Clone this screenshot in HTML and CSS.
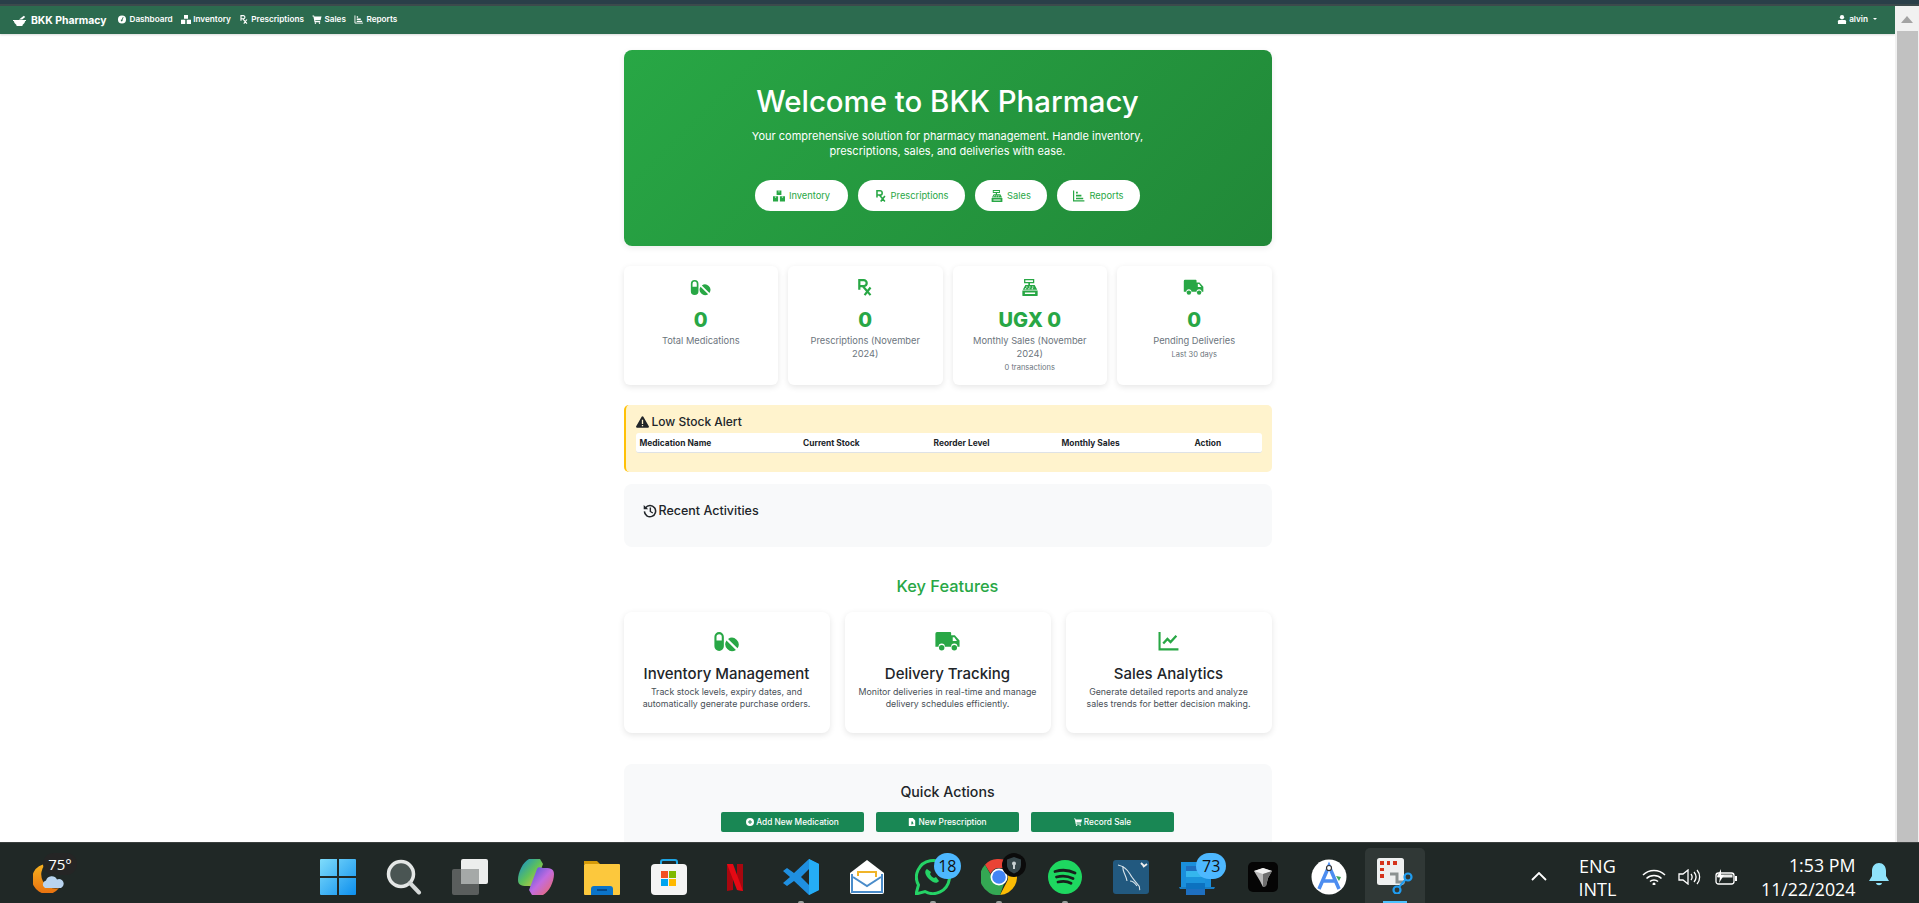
FILE: index.html

```html
<!DOCTYPE html>
<html lang="en">
<head>
    <meta charset="UTF-8">
    <meta name="viewport" content="width=device-width, initial-scale=1.0">
    <title>BKK Pharmacy</title>
    <link rel="stylesheet" href="styles.css">
</head>
<body>

    <!-- icon set -->
    <svg class="sprite" xmlns="http://www.w3.org/2000/svg">
        <symbol id="i-pills" viewBox="0 0 26 20">
            <path d="M5.500 1a4.500 4.500 0 0 1 4.500 4.500v9a4.500 4.500 0 0 1-9 0v-9A4.500 4.500 0 0 1 5.500 1zm0 2A2.500 2.500 0 0 0 3 5.500V9h5V5.500A2.500 2.500 0 0 0 5.500 3z" fill-rule="evenodd"/>
            <path d="M14 7.500a6.500 6.500 0 0 1 9 9zM12.500 9l9 9a6.500 6.500 0 0 1-9-9z"/>
        </symbol>
        <symbol id="i-rx" viewBox="0 0 16 20">
            <path d="M1.300 12.500V1.300h5.200a3.500 3.500 0 0 1 0 7H1.300M5 8l9.500 11M14.500 10L7.500 19" fill="none" stroke="currentColor" stroke-width="2.600"/>
        </symbol>
        <symbol id="i-register" viewBox="0 0 20 20">
            <path d="M3 0h12v5h-5v2h5.500l3 5.500H1.500l3-5.500H8V5H3zM4.500 1.500v2h9v-2zM1 13.500h18V19a1 1 0 0 1-1 1H2a1 1 0 0 1-1-1z" fill-rule="evenodd"/>
            <path d="M5.500 8.800h1.500v1.200H5.500zm3.500 0h1.500v1.200H9zm3.500 0H14v1.200h-1.500zM4 10.800h1.500V12H4zm4 0h1.500V12H8zm4 0h1.500V12H12zM4 16h12v1.500H4z" fill="#fff"/>
        </symbol>
        <symbol id="i-truck" viewBox="0 0 24 20">
            <path d="M1.500 1H14a1 1 0 0 1 1 1v2h3.500L23 9v6h-2a3 3 0 0 0-6 0H9a3 3 0 0 0-6 0H0V2.500A1.500 1.500 0 0 1 1.500 1zM16.500 6v3.500h4L18 6z" fill-rule="evenodd"/>
            <circle cx="6" cy="16" r="2.600"/><circle cx="18" cy="16" r="2.600"/>
        </symbol>
        <symbol id="i-chart" viewBox="0 0 20 20">
            <path d="M1 1v16.500h18" fill="none" stroke="currentColor" stroke-width="2"/>
            <path d="M4.500 12l4-4.500 3 3L17 4.500" fill="none" stroke="currentColor" stroke-width="2.200"/>
        </symbol>
        <symbol id="i-bars" viewBox="0 0 20 20">
            <path d="M1 1v17h18" fill="none" stroke="currentColor" stroke-width="2"/>
            <path d="M5 3h3v3H5zM5 8h9v3H5zM5 13h12v2.500H5z"/>
        </symbol>
        <symbol id="i-boxes" viewBox="0 0 20 18">
            <path d="M6 0h8v7.500H6zM0 9.500h8.500V18H0zM11.500 9.500H20V18h-8.500z"/>
            <path d="M9 0h2v3H9zM3.200 9.500h2v3h-2zM14.800 9.500h2v3h-2z" fill="#fff" opacity=".55"/>
        </symbol>
        <symbol id="i-gauge" viewBox="0 0 20 20">
            <path d="M10 1a9 9 0 1 0 0 18 9 9 0 0 0 0-18zm3.500 4L11 11a2 2 0 1 1-1.600-.900L12 4.500z" fill-rule="evenodd"/>
        </symbol>
        <symbol id="i-cart" viewBox="0 0 20 20">
            <path d="M0 1h3.500l.600 2.500H20l-2 8H6.200l.400 2H17V16H4.500L2 3.300H0z"/>
            <circle cx="6.500" cy="18" r="1.800"/><circle cx="15.500" cy="18" r="1.800"/>
        </symbol>
        <symbol id="i-user" viewBox="0 0 18 20">
            <circle cx="9" cy="5" r="4.800"/><path d="M3 11h12a3 3 0 0 1 3 3v6H0v-6a3 3 0 0 1 3-3z"/>
        </symbol>
        <symbol id="i-mortar" viewBox="0 0 24 20">
            <path d="M0 9h24v2h-1.500a10 10 0 0 1-5 7.500V20h-11v-1.500A10 10 0 0 1 1.500 11H0z"/>
            <path d="M11 8l9-7 2.500 2.500L17 8z"/>
        </symbol>
        <symbol id="i-warn" viewBox="0 0 20 18">
            <path d="M10 0a1.500 1.500 0 0 1 1.300.800l8.400 14.900A1.500 1.500 0 0 1 18.400 18H1.600a1.500 1.500 0 0 1-1.300-2.300L8.700.800A1.500 1.500 0 0 1 10 0z"/>
            <path d="M9 5.500h2V12H9zM9 13.500h2v2H9z" fill="#fff3cd"/>
        </symbol>
        <symbol id="i-history" viewBox="0 0 20 20">
            <path d="M3.500 5.500A8 8 0 1 1 2 10.500" fill="none" stroke="currentColor" stroke-width="2.200"/>
            <path d="M1 1.500l6.500 6H1zM9.500 5h2v5.200l3 2-1 1.500-4-2.600z"/>
        </symbol>
        <symbol id="i-plus" viewBox="0 0 20 20">
            <path d="M10 0a10 10 0 1 0 0 20 10 10 0 0 0 0-20zm-1.200 5h2.400v3.800H15v2.400h-3.800V15H8.800v-3.800H5V8.800h3.800z" fill-rule="evenodd"/>
        </symbol>
        <symbol id="i-file" viewBox="0 0 16 20">
            <path d="M1.500 0H10l6 6v12.500a1.500 1.500 0 0 1-1.500 1.500h-13A1.500 1.500 0 0 1 0 18.500v-17A1.500 1.500 0 0 1 1.500 0zM6.500 9v7h2v-2.500l2 2.500 1.500-1.500-2-2a2.200 2.200 0 0 0-1-3.500z" fill-rule="evenodd"/>
        </symbol>
    </svg>

    <div class="top-strip"></div>

    <div class="window">
        <div class="page">
            <nav class="navbar">
                <a class="brand"><svg class="brand-icon"><use href="#i-mortar"/></svg>BKK Pharmacy</a>
                <a class="nav-link"><svg><use href="#i-gauge"/></svg>Dashboard</a>
                <a class="nav-link"><svg><use href="#i-boxes"/></svg>Inventory</a>
                <a class="nav-link"><svg><use href="#i-rx"/></svg>Prescriptions</a>
                <a class="nav-link"><svg><use href="#i-cart"/></svg>Sales</a>
                <a class="nav-link"><svg><use href="#i-bars"/></svg>Reports</a>
                <a class="nav-link nav-user"><svg><use href="#i-user"/></svg>alvin<span class="caret"></span></a>
            </nav>

            <main class="container">
                <section class="hero">
                    <h1>Welcome to BKK Pharmacy</h1>
                    <p>Your comprehensive solution for pharmacy management. Handle inventory,<br>prescriptions, sales, and deliveries with ease.</p>
                    <div class="hero-buttons">
                        <a class="pill pill-inv"><svg><use href="#i-boxes"/></svg>Inventory</a>
                        <a class="pill pill-rx"><svg><use href="#i-rx"/></svg>Prescriptions</a>
                        <a class="pill pill-sales"><svg><use href="#i-register"/></svg>Sales</a>
                        <a class="pill pill-rep"><svg><use href="#i-bars"/></svg>Reports</a>
                    </div>
                </section>

                <section class="stats">
                    <div class="stat">
                        <svg class="stat-icon"><use href="#i-pills"/></svg>
                        <div class="stat-num">0</div>
                        <div class="stat-label">Total Medications</div>
                    </div>
                    <div class="stat">
                        <svg class="stat-icon"><use href="#i-rx"/></svg>
                        <div class="stat-num">0</div>
                        <div class="stat-label">Prescriptions (November<br>2024)</div>
                    </div>
                    <div class="stat">
                        <svg class="stat-icon"><use href="#i-register"/></svg>
                        <div class="stat-num">UGX 0</div>
                        <div class="stat-label">Monthly Sales (November<br>2024)</div>
                        <div class="stat-sub">0 transactions</div>
                    </div>
                    <div class="stat">
                        <svg class="stat-icon"><use href="#i-truck"/></svg>
                        <div class="stat-num">0</div>
                        <div class="stat-label">Pending Deliveries</div>
                        <div class="stat-sub">Last 30 days</div>
                    </div>
                </section>

                <section class="alert-box">
                    <h5><svg><use href="#i-warn"/></svg>Low Stock Alert</h5>
                    <div class="stock-head">
                        <span>Medication Name</span>
                        <span>Current Stock</span>
                        <span>Reorder Level</span>
                        <span>Monthly Sales</span>
                        <span>Action</span>
                    </div>
                </section>

                <section class="recent">
                    <h5><svg><use href="#i-history"/></svg>Recent Activities</h5>
                </section>

                <h2 class="features-title">Key Features</h2>
                <section class="features">
                    <div class="feature">
                        <svg class="feature-icon"><use href="#i-pills"/></svg>
                        <h3>Inventory Management</h3>
                        <p>Track stock levels, expiry dates, and<br>automatically generate purchase orders.</p>
                    </div>
                    <div class="feature">
                        <svg class="feature-icon"><use href="#i-truck"/></svg>
                        <h3>Delivery Tracking</h3>
                        <p>Monitor deliveries in real-time and manage<br>delivery schedules efficiently.</p>
                    </div>
                    <div class="feature">
                        <svg class="feature-icon"><use href="#i-chart"/></svg>
                        <h3>Sales Analytics</h3>
                        <p>Generate detailed reports and analyze<br>sales trends for better decision making.</p>
                    </div>
                </section>

                <section class="quick">
                    <h4>Quick Actions</h4>
                    <div class="quick-buttons">
                        <a class="btn"><svg><use href="#i-plus"/></svg>Add New Medication</a>
                        <a class="btn"><svg><use href="#i-file"/></svg>New Prescription</a>
                        <a class="btn"><svg><use href="#i-cart"/></svg>Record Sale</a>
                    </div>
                </section>
            </main>
        </div>

        <div class="scrollbar">
            <div class="scroll-up"></div>
            <div class="scroll-thumb"></div>
        </div>
    </div>

    <footer class="taskbar">
        <div class="weather">
            <svg class="weather-icon" viewBox="0 0 34 30">
                <defs><linearGradient id="moon" x1="0" y1="0" x2="0" y2="1"><stop offset="0" stop-color="#f7b21f"/><stop offset="1" stop-color="#e8700f"/></linearGradient></defs>
                <path d="M13 1A15 15 0 1 0 26 25 14 14 0 0 1 13 1z" fill="url(#moon)"/>
                <path d="M12 25a4 4 0 0 1 1-7.500 6 6 0 0 1 11-1 4.500 4.500 0 0 1 4 8.500z" fill="#b9d4f0"/>
            </svg>
            <span class="temp">75°</span>
        </div>

        <div class="apps">
            <div class="app">
                <svg viewBox="0 0 36 36"><defs><linearGradient id="win" x1="0" y1="0" x2="1" y2="1"><stop offset="0" stop-color="#7fdcfb"/><stop offset="1" stop-color="#0d8fee"/></linearGradient></defs><path d="M1 0h16v17H0V1a1 1 0 0 1 1-1zM19 0h16a1 1 0 0 1 1 1v16H19zM0 19h17v17H1a1 1 0 0 1-1-1zM19 19h17v16a1 1 0 0 1-1 1H19z" fill="url(#win)"/></svg>
            </div>
            <div class="app">
                <svg viewBox="0 0 36 36"><circle cx="15" cy="15" r="12.500" fill="#4a5553" stroke="#e4e7e6" stroke-width="3.500"/><path d="M24 24l9 9.500" stroke="#d5d9d8" stroke-width="4" stroke-linecap="round"/></svg>
            </div>
            <div class="app">
                <svg viewBox="0 0 36 36"><rect x="9" y="0" width="27" height="25" rx="2" fill="#eceeed"/><rect x="0" y="10" width="27" height="26" rx="2" fill="#5f6362" opacity=".92"/><rect x="9" y="10" width="18" height="15" fill="#a5a9a8"/></svg>
            </div>
            <div class="app">
                <svg viewBox="0 0 36 36"><defs><linearGradient id="cp1" x1="0" y1="0" x2="1" y2="1"><stop offset="0" stop-color="#0c8bd8"/><stop offset=".5" stop-color="#5fc15a"/><stop offset="1" stop-color="#f0c93a"/></linearGradient><linearGradient id="cp2" x1="0" y1="0" x2="1" y2="1"><stop offset="0" stop-color="#3a56d8"/><stop offset=".5" stop-color="#c26be0"/><stop offset="1" stop-color="#f26a5a"/></linearGradient></defs><path d="M11 0h11l3 5-8 21c-2 3-4 1-6 1-6 0-11 0-11-6C0 13 5 3 11 0z" fill="url(#cp1)"/><path d="M25 36H14l-3-5 8-21c2-3 4-1 6-1 6 0 11 0 11 6 0 8-5 18-11 21z" fill="url(#cp2)"/></svg>
            </div>
            <div class="app">
                <svg viewBox="0 0 36 36"><path d="M0 2h13l3 3h-16z" fill="#d59a08"/><rect x="0" y="5" width="36" height="31" rx="1" fill="#fcc83d"/><path d="M7 36V30a3 3 0 0 1 3-3h16a3 3 0 0 1 3 3v6z" fill="#0b74c9"/><path d="M13 31h10" stroke="#063c75" stroke-width="1.500"/></svg>
            </div>
            <div class="app">
                <svg viewBox="0 0 36 36"><path d="M10 6V3q0-2 2-2h12q2 0 2 2v3" fill="none" stroke="#1da5e5" stroke-width="2"/><rect x="0" y="5" width="36" height="31" rx="4" fill="#f4f4f4"/><rect x="10" y="12" width="7" height="7" fill="#f25022"/><rect x="18" y="12" width="7" height="7" fill="#7fba00"/><rect x="10" y="20" width="7" height="7" fill="#00a4ef"/><rect x="18" y="20" width="7" height="7" fill="#ffb900"/></svg>
            </div>
            <div class="app">
                <svg viewBox="0 0 36 36"><path d="M10 5h6v26l-6 1z" fill="#a8070f"/><path d="M20 5h6v27l-6-1z" fill="#a8070f"/><path d="M10 5h6l10 27-6-1z" fill="#e50914"/></svg>
            </div>
            <div class="app app-run">
                <svg viewBox="0 0 36 36"><path d="M26 0l10 5v26l-10 5-15-14-7 5-4-3 7-6-7-6 4-3 7 5zm0 10l-8 8 8 8z" fill="#1f8fe0" fill-rule="evenodd"/><path d="M26 0l10 5v26l-10 5z" fill="#25adf6"/></svg>
            </div>
            <div class="app">
                <svg viewBox="0 0 36 36"><path d="M18 1l17 13v19a2 2 0 0 1-2 2H3a2 2 0 0 1-2-2V14z" fill="#fff"/><path d="M3 15v18h30V15M4 18l14 9 14-9" fill="none" stroke="#4a8cca" stroke-width="2"/><path d="M9 17v-4h18v5" fill="none" stroke="#f0b429" stroke-width="2"/></svg>
            </div>
            <div class="app app-run">
                <svg viewBox="0 0 36 36"><path d="M1 35l2.500-9A16.500 16.500 0 1 1 10 32.500z" fill="none" stroke="#25d366" stroke-width="3"/><path d="M12 10c-3 2-2 6 2 10s8 5 10 2l-3-4-2 1c-2-1-3-2-4-4l1-2z" fill="#25d366"/></svg>
                <span class="count count-wa">18</span>
            </div>
            <div class="app app-run">
                <svg viewBox="0 0 36 36"><path d="M18 0a18 18 0 0 1 15.600 9H18a9 9 0 0 0-8.400 5.700L4 5.700A18 18 0 0 1 18 0z" fill="#ea4335"/><path d="M33.600 9A18 18 0 0 1 19 36l6.800-13A9 9 0 0 0 25 13z" fill="#fbbc05"/><path d="M4 5.700l8 14a9 9 0 0 0 11 5l-4 11.300A18 18 0 0 1 4 5.700z" fill="#34a853"/><circle cx="18" cy="18" r="8.500" fill="#fff"/><circle cx="18" cy="18" r="6.800" fill="#4285f4"/></svg>
                <span class="shield"><svg viewBox="0 0 24 24"><path d="M12 4l7 2.500V12c0 4-3 7-7 8.500C8 19 5 16 5 12V6.500z" fill="#36464a"/><circle cx="12" cy="10.500" r="2" fill="#c8d0d2"/><path d="M11 11h2v5h-2z" fill="#c8d0d2"/></svg></span>
            </div>
            <div class="app app-run">
                <svg viewBox="0 0 36 36"><circle cx="18" cy="18" r="17" fill="#1ed760"/><path d="M8 12.500c7-2 14-1.500 20 1.500M9.500 18c6-1.600 11.500-1 16.500 1.500M11 23c5-1.200 9.500-.8 13 1.200" fill="none" stroke="#17211c" stroke-width="2.800" stroke-linecap="round"/></svg>
            </div>
            <div class="app">
                <svg viewBox="0 0 36 36"><rect width="36" height="34" y="1" rx="3" fill="#22597f"/><path d="M5 6c5 1 9 4 12 9 2 4 5 7 9 12 1 1 0 3 1 4M10 7c-1 5 3 9 4 15M17 22c3 0 5 2 7 5" fill="none" stroke="#d7e3ea" stroke-width="1.100"/><path d="M28 4l3 3M30 8l4-3" stroke="#eee" stroke-width="1.800"/></svg>
            </div>
            <div class="app">
                <svg viewBox="0 0 36 36"><path d="M2 3h30v26H2z" fill="#1a8fdc"/><path d="M0 28h36l-1 2H1z" fill="#1a7ec4"/><path d="M7 7h19v29H7z" fill="#1e6fc0"/><path d="M7 12h19v6H7z" fill="#35b6ed"/><path d="M7 18h19v6H7z" fill="#1c94dc"/><path d="M7 24h19v6H7z" fill="#0c72c0"/></svg>
                <span class="count count-ol">73</span>
            </div>
            <div class="app">
                <svg viewBox="0 0 30 30" class="app-small"><rect width="30" height="30" rx="5" fill="#050505"/><path d="M6 9l9-3 9 3-4 7-2 8-3 1-3-6z" fill="#b8b8b8"/><path d="M6 9l9 3 9-3-9-3z" fill="#f2f2f2"/><path d="M15 12l9-3-4 7-2 8-3 1z" fill="#6f6f6f"/></svg>
            </div>
            <div class="app">
                <svg viewBox="0 0 36 36"><circle cx="18" cy="18" r="17.500" fill="#fff"/><path d="M8 30L18 7l10 23M11 22h14" fill="none" stroke="#4c8df0" stroke-width="3.500"/><circle cx="18" cy="9" r="2.500" fill="#fff" stroke="#333" stroke-width="1.200"/><path d="M25 17l5 1-2 4z" fill="#3ba55d"/></svg>
            </div>
            <div class="app app-active">
                <svg viewBox="0 0 36 36"><rect x="0" y="0" width="27" height="27" rx="2.500" fill="#eef0f0"/><path d="M3 3h4v4H3zM10 3h3v4h-3zM16 3h4v4h-4zM3 10h4v3H3zM3 16h4v4H3z" fill="#d5341c"/><path d="M13 16h7v8h8" fill="none" stroke="#8b9291" stroke-width="3"/><circle cx="31" cy="19" r="3.500" fill="none" stroke="#1f9cf0" stroke-width="2.200"/><circle cx="20" cy="32" r="3.500" fill="none" stroke="#1f9cf0" stroke-width="2.200"/><path d="M22 29l7-8" stroke="#1f9cf0" stroke-width="2"/></svg>
            </div>
        </div>

        <div class="tray">
            <svg class="tray-chevron" viewBox="0 0 16 9"><path d="M1 8l7-7 7 7" fill="none" stroke="#fff" stroke-width="1.800"/></svg>
            <div class="lang"><span>ENG</span><span>INTL</span></div>
            <div class="tray-icons">
                <svg viewBox="0 0 24 16"><path d="M1 6c6-6 16-6 22 0M4.500 9.500c4-4 11-4 15 0M8 12.500c2-2 6-2 8 0" fill="none" stroke="#fff" stroke-width="1.500"/><circle cx="12" cy="15" r="1.500" fill="#fff"/></svg>
                <svg viewBox="0 0 24 16"><path d="M1 5h4l5-4v14l-5-4H1z" fill="none" stroke="#fff" stroke-width="1.300"/><path d="M13 5c1.500 2 1.500 4 0 6M16 3c2.500 3 2.500 7 0 10M19 1c3.500 4 3.500 10 0 14" fill="none" stroke="#fff" stroke-width="1.300"/></svg>
                <svg viewBox="0 0 24 16"><rect x="2" y="4" width="18" height="11" rx="2.500" fill="none" stroke="#fff" stroke-width="1.300"/><path d="M21 7h2v5h-2z" fill="#fff"/><path d="M7 0L3 8h3l-1 6 5-8H7z" fill="#fff"/><rect x="3.500" y="5.500" width="15" height="3" fill="#fff" opacity=".9"/></svg>
            </div>
            <div class="clock"><span>1:53 PM</span><span>11/22/2024</span></div>
            <svg class="bell" viewBox="0 0 20 24"><path d="M10 0c4 0 7 3 7 8v5l3 5H0l3-5V8c0-5 3-8 7-8z" fill="#8fe3fb"/><path d="M7 20h6c-.5 3-5.500 3-6 0z" fill="#8fe3fb"/></svg>
        </div>
    </footer>

</body>
</html>
```

FILE: styles.css

```css
* {
    box-sizing: border-box;
}
html, body {
    height: 100%;
}
body {
    margin: 0;
    font-family: Inter, "Open Sans", sans-serif;
    background: #fff;
    color: #212529;
    display: flex;
    flex-direction: column;
    overflow: hidden;
}
.sprite {
    display: none;
}
svg {
    fill: currentColor;
    display: block;
}
h1, h2, h3, h4, h5, p {
    margin: 0;
    font-weight: 500;
}

.top-strip {
    height: 6px;
    background: linear-gradient(#2a3f49 66%, #3c4a4c 66%);
}
.window {
    flex: 1;
    display: flex;
    min-height: 0;
}
.page {
    flex: 1;
    min-width: 0;
    overflow: hidden;
}
.scrollbar {
    width: 24px;
    background: #f1f1f1;
    display: flex;
    flex-direction: column;
    align-items: center;
}
.scroll-up {
    height: 25px;
    width: 100%;
    position: relative;
}
.scroll-up::after {
    content: "";
    position: absolute;
    left: 6px;
    top: 10px;
    border-left: 6px solid transparent;
    border-right: 6px solid transparent;
    border-bottom: 7px solid #a3a3a3;
}
.scroll-thumb {
    flex: 1;
    width: 21px;
    background: #c1c1c1;
}

/* navbar */
.navbar {
    height: 28px;
    background: #2c6b4f;
    color: #fff;
    display: flex;
    align-items: center;
    padding-left: 13px;
    box-shadow: 0 1px 2px rgba(0, 0, 0, 0.15);
}
.brand {
    display: flex;
    align-items: center;
    font-size: 10.400px;
    font-weight: 700;
    width: 104px;
}
.brand-icon {
    width: 13px;
    height: 11px;
    margin-right: 5px;
}
.nav-link {
    display: flex;
    align-items: center;
    font-size: 8.200px;
    font-weight: 600;
    margin-right: 8px;
    padding-bottom: 2px;
}
.nav-link svg {
    width: 10px;
    height: 9px;
    margin-right: 2.500px;
}
.nav-user {
    margin-left: auto;
    margin-right: 18px;
}
.caret {
    margin-left: 5px;
    border-left: 2px solid transparent;
    border-right: 2px solid transparent;
    border-top: 2px solid #fff;
}

.container {
    width: 648px;
    margin: 16px auto 0;
}

/* hero */
.hero {
    height: 196px;
    padding: 32px 0 35px;
    border-radius: 8px;
    background: linear-gradient(135deg, #28a745, #218838);
    box-shadow: 0 2px 6px rgba(0, 0, 0, 0.08);
    color: #fff;
    text-align: center;
}
.hero h1 {
    font-size: 29.400px;
    line-height: 40px;
}
.hero p {
    font-size: 11px;
    line-height: 15px;
    margin-top: 7px;
    font-weight: 400;
}
.hero-buttons {
    display: flex;
    justify-content: center;
    gap: 10px;
    margin-top: 21px;
}
.pill {
    height: 31px;
    border-radius: 16px;
    background: #fff;
    color: #28a745;
    font-size: 9.300px;
    display: flex;
    align-items: center;
    justify-content: center;
}
.pill svg {
    width: 12px;
    height: 12px;
    margin-right: 4px;
}
.pill-inv { width: 93px; }
.pill-rx { width: 107px; }
.pill-sales { width: 72px; }
.pill-rep { width: 83px; }

/* stat cards */
.stats {
    display: grid;
    grid-template-columns: repeat(4, 1fr);
    gap: 10px;
    margin-top: 20px;
}
.stat {
    height: 119px;
    padding-top: 13px;
    border-radius: 6px;
    background: #fff;
    box-shadow: 0 2px 6px rgba(0, 0, 0, 0.1);
    text-align: center;
}
.stat-icon {
    width: 22px;
    height: 17px;
    margin: 0 auto;
    color: #28a745;
}
.stat-num {
    margin-top: 14px;
    font-size: 20px;
    line-height: 20px;
    font-weight: 800;
    color: #28a745;
}
.stat-label {
    margin-top: 4px;
    font-size: 9.300px;
    line-height: 13px;
    color: #6c757d;
}
.stat-sub {
    margin-top: 2px;
    font-size: 7.500px;
    line-height: 12px;
    color: #6c757d;
}

/* low stock */
.alert-box {
    height: 67px;
    margin-top: 20px;
    padding: 9px 10px 0;
    background: #fff3cd;
    border-left: 2px solid #ffc107;
    border-radius: 5px;
}
.alert-box h5, .recent h5 {
    display: flex;
    align-items: center;
    line-height: 16px;
}
.alert-box h5 {
    font-size: 12px;
}
.recent h5 {
    font-size: 12.500px;
}
.alert-box h5 svg {
    width: 13px;
    height: 12px;
    margin-right: 3px;
}
.stock-head {
    display: grid;
    grid-template-columns: 163.500px 130.500px 128px 133px 1fr;
    align-items: center;
    height: 20px;
    margin-top: 3px;
    padding-left: 4px;
    background: #fff;
    border-bottom: 1px solid #dee2e6;
    border-radius: 3px;
    font-size: 8.400px;
    font-weight: 700;
}

/* recent */
.recent {
    height: 63px;
    margin-top: 12px;
    padding: 19px 19px 0;
    background: #f8f9fa;
    border-radius: 8px;
}
.recent h5 svg {
    width: 14px;
    height: 14px;
    margin-right: 2px;
}

/* features */
.features-title {
    margin-top: 29px;
    font-size: 16.400px;
    line-height: 20px;
    color: #28a745;
    text-align: center;
}
.features {
    display: grid;
    grid-template-columns: repeat(3, 1fr);
    gap: 15px;
    margin-top: 16px;
}
.feature {
    height: 121px;
    padding-top: 19px;
    border-radius: 8px;
    background: #fff;
    box-shadow: 0 2px 6px rgba(0, 0, 0, 0.1);
    text-align: center;
}
.feature-icon {
    width: 28px;
    height: 21px;
    margin: 0 auto;
    color: #28a745;
}
.feature h3 {
    margin-top: 12px;
    font-size: 15px;
    line-height: 20px;
}
.feature p {
    margin-top: 2px;
    font-size: 8.800px;
    line-height: 12px;
    font-weight: 400;
    color: #495057;
}

/* quick actions */
.quick {
    margin-top: 31px;
    padding: 19px 0 20px;
    background: #f8f9fa;
    border-radius: 8px;
    text-align: center;
}
.quick h4 {
    font-size: 14.200px;
    line-height: 18px;
}
.quick-buttons {
    display: flex;
    justify-content: center;
    gap: 12px;
    margin-top: 11px;
}
.btn {
    width: 143px;
    height: 20px;
    padding-bottom: 1px;
    display: flex;
    align-items: center;
    justify-content: center;
    background: #198754;
    color: #fff;
    border-radius: 2px;
    font-size: 8.300px;
    font-weight: 500;
}
.btn svg {
    width: 8px;
    height: 8px;
    margin-right: 2px;
}

/* windows taskbar */
.taskbar {
    height: 61px;
    flex: none;
    display: flex;
    background: #202826;
    border-top: 1px solid #3a3f3e;
    color: #fff;
    font-family: "Open Sans", sans-serif;
}
.weather {
    width: 304px;
    position: relative;
}
.weather-icon {
    position: absolute;
    left: 33px;
    top: 20px;
    width: 34px;
    height: 30px;
}
.temp {
    position: absolute;
    left: 43px;
    top: 10px;
    width: 34px;
    height: 22px;
    border-radius: 11px;
    background: #252525;
    font-size: 15px;
    line-height: 22px;
    text-align: center;
}
.apps {
    display: flex;
    padding-left: 1px;
}
.app {
    width: 66.100px;
    position: relative;
    display: flex;
    align-items: center;
    justify-content: center;
    padding-top: 7px;
}
.app > svg {
    width: 36px;
    height: 36px;
}
.app > svg.app-small {
    width: 30px;
    height: 30px;
}
.app-run::after {
    content: "";
    position: absolute;
    bottom: 0;
    left: 30px;
    width: 6px;
    height: 2px;
    border-radius: 2px 2px 0 0;
    background: #9aa09e;
}
.app-active {
    height: 55px;
    align-self: flex-end;
    margin-left: 2px;
    width: 60px;
    background: #303836;
    border-radius: 5px 5px 0 0;
    padding-top: 0;
}
.app-active::after {
    content: "";
    position: absolute;
    bottom: 0;
    left: 18px;
    width: 24px;
    height: 2px;
    background: #4cc2ff;
}
.count {
    position: absolute;
    top: 10px;
    height: 26px;
    border-radius: 13px;
    background: #4db8ff;
    color: #111;
    font-size: 16px;
    line-height: 26px;
    text-align: center;
}
.count-wa {
    left: 34px;
    width: 27px;
}
.count-ol {
    left: 32px;
    width: 30px;
}
.shield {
    position: absolute;
    left: 36px;
    top: 10px;
    width: 24px;
    height: 24px;
    border-radius: 50%;
    background: #0b0b0b;
}
.tray {
    flex: 1;
    display: flex;
    align-items: center;
    padding: 7px 0 0 106px;
}
.tray-chevron {
    width: 16px;
    height: 9px;
}
.lang {
    display: flex;
    flex-direction: column;
    margin-left: 32px;
    padding-top: 3px;
    font-size: 18px;
    line-height: 23px;
    text-align: center;
}
.tray-icons {
    display: flex;
    gap: 12px;
    margin-left: 26px;
}
.tray-icons svg {
    width: 24px;
    height: 16px;
}
.clock {
    width: 100px;
    margin-left: 17px;
    display: flex;
    flex-direction: column;
    align-items: flex-end;
    font-size: 17.800px;
    line-height: 24px;
}
.bell {
    width: 20px;
    height: 24px;
    margin-left: 14px;
    margin-top: -4px;
}
```
